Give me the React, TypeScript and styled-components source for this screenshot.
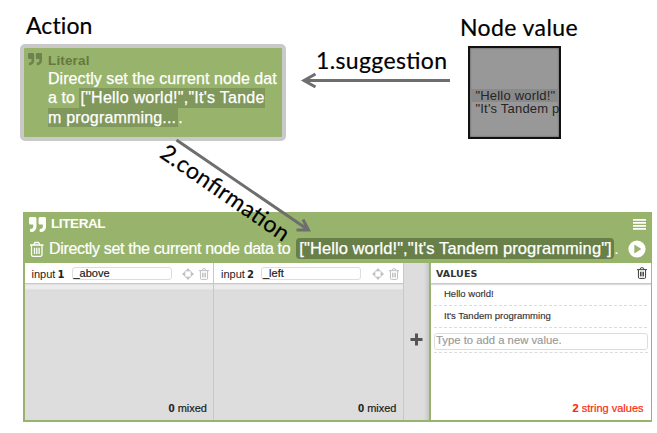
import React from "react";
import styled, { createGlobalStyle } from "styled-components";
import { FaQuoteRight } from "react-icons/fa";

const GREEN = "#98b46c";

const Global = createGlobalStyle`
  *, *::before, *::after { box-sizing: border-box; }
  html, body { margin: 0; background: #fff; overflow: hidden; }
  body { font-family: "Liberation Sans", Arial, sans-serif; color: #333; }
`;

const Page = styled.main`
  position: relative;
  display: flex;
  flex-direction: column;
  width: 657px;
  height: 433px;
  background: #fff;
`;

const Stage = styled.section`
  display: flex;
  justify-content: space-between;
  height: 212px;
  padding: 11px 79px 0 20px;
`;

const Figure = styled.div<{ $top?: number }>`
  display: flex;
  flex-direction: column;
  padding-top: ${(p) => p.$top ?? 0}px;
`;

const Caption = styled.h2<{ $indent: number; $spacing: number }>`
  margin: 0 0 0 ${(p) => p.$indent}px;
  font: 400 23px/28px Lato, sans-serif;
  letter-spacing: ${(p) => p.$spacing}px;
  color: #000;
  white-space: nowrap;
  height: 28px;
  -webkit-text-stroke: 0.2px #000;
`;

const ActionCard = styled.article`
  display: grid;
  grid-template-columns: 20px 1fr;
  align-content: start;
  margin-top: 5px;
  width: 266px;
  height: 97px;
  padding: 4px 0 0 4px;
  border: 4.5px solid #c9c9c9;
  border-radius: 5px;
  background: ${GREEN};
`;

const CardIcon = styled(FaQuoteRight)`
  width: 14px;
  height: 14px;
  color: #6d824d;
`;

const CardTitle = styled.h3`
  margin: 0;
  padding-top: 0.5px;
  font-size: 13.5px;
  line-height: 16px;
  font-weight: 700;
  letter-spacing: 0.15px;
  color: #64783f;
`;

const CardText = styled.p`
  grid-column: 2;
  margin: 0;
  font-size: 16px;
  line-height: 19.5px;
  color: #fff;
  white-space: nowrap;
  letter-spacing: 0.06px;
  -webkit-text-stroke: 0.25px #fff;
`;

const CardLine = styled.span`
  display: block;
  height: 19.5px;
`;

const Mark = styled.mark<{ $first?: boolean }>`
  display: inline-block;
  height: 19.5px;
  padding: ${(p) => (p.$first ? "0 0 0 1px" : "0 2px 0 0")};
  background: #80985b;
  color: #fff;
  letter-spacing: ${(p) => (p.$first ? 0.26 : 0.18)}px;
`;

const NodeBox = styled.div`
  width: 93px;
  height: 93px;
  margin: 5px 0 0 8px;
  padding-top: 41.5px;
  overflow: hidden;
  border: 2px solid #111;
  background: #989898;
  box-shadow: inset 0 0 2px #444;
`;

const NodeLine = styled.div<{ $active?: boolean }>`
  height: 13px;
  padding-left: 5.5px;
  font-size: 13px;
  line-height: 13px;
  letter-spacing: 0.2px;
  white-space: nowrap;
  color: #252525;
  background: ${(p) => (p.$active ? "#898989" : "transparent")};
`;

const Panel = styled.section`
  display: flex;
  flex-direction: column;
  width: 629px;
  height: 209.5px;
  margin-left: 23px;
  background: ${GREEN};
`;

const PanelHead = styled.header`
  display: grid;
  grid-template-rows: 24px 25px;
  height: 51px;
  padding: 0 6px 0 6px;
  color: #fff;
`;

const HeadRow = styled.div`
  display: flex;
  align-items: center;
  white-space: nowrap;
`;

const HeadQuote = styled(FaQuoteRight)`
  width: 17px;
  height: 17px;
  flex: none;
  margin-top: 1px;
`;

const HeadTitle = styled.h1`
  margin: 0 0 0 5px;
  font-size: 13.5px;
  line-height: 16px;
  font-weight: 700;
  letter-spacing: -0.4px;
  flex: 1;
`;

const Sentence = styled.div`
  margin-left: 5px;
  font-size: 16px;
  line-height: 20px;
  letter-spacing: -0.33px;
  -webkit-text-stroke: 0.2px #fff;
`;

const Literal = styled.span`
  height: 20.5px;
  margin-left: 6px;
  padding: 0 2px 0 3px;
  border-radius: 4px;
  background: #687f47;
  font-size: 16.5px;
  line-height: 20.5px;
  letter-spacing: 0.09px;
  -webkit-text-stroke: 0.25px #fff;
`;

const Stop = styled.span`
  margin-left: 0.5px;
  font-size: 16px;
  line-height: 20px;
`;

const Spacer = styled.span`
  flex: 1;
`;

const Body = styled.div`
  display: flex;
  height: 157px;
  margin: 0 1.5px;
`;

const Column = styled.div`
  display: flex;
  flex-direction: column;
  flex: none;
  width: 189.5px;
  background: #ddd;
  border-right: 1px solid #c8c8c8;
`;

const ColumnHead = styled.div`
  display: flex;
  align-items: center;
  height: 21px;
  padding: 1px 4px 0 7px;
  background: #fff;
  border-bottom: 1px solid #c9c9c9;
  color: #222;
`;

const Strip = styled.div`
  height: 7px;
  background: linear-gradient(#dedede, #eee 30%, #eaeaea 70%, #d4d4d4);
`;

const InputLabel = styled.span`
  width: 40px;
  font-size: 11px;
  white-space: nowrap;
  letter-spacing: 0;
  b { font-family: "DejaVu Sans", sans-serif; font-size: 10px; margin-left: -1px; }
`;

const Field = styled.span`
  width: 100px;
  height: 13px;
  padding-left: 1px;
  border: 1px solid #ddd;
  border-radius: 3px;
  font-size: 11px;
  line-height: 11px;
  color: #222;
  -webkit-text-stroke: 0.2px #222;
`;

const Tools = styled.span`
  display: flex;
  align-items: center;
  gap: 5px;
  margin-left: auto;
`;

const Count = styled.div<{ $red?: boolean }>`
  margin-top: auto;
  padding: 0 ${(p) => (p.$red ? 7 : 6)}px 5.5px 0;
  text-align: right;
  font-size: 11px;
  line-height: 13px;
  color: ${(p) => (p.$red ? "#fb2a0a" : "#1c1c1c")};
  -webkit-text-stroke: 0.2px ${(p) => (p.$red ? "#fb2a0a" : "#1c1c1c")};
`;

const AddColumn = styled.div`
  display: flex;
  align-items: center;
  justify-content: center;
  width: 25px;
  padding-bottom: 5px;
  background: linear-gradient(90deg, #ddd 80%, #c6c6c6);
`;

const Values = styled.div`
  display: flex;
  flex-direction: column;
  flex: 1;
  margin-left: 2.5px;
  background: #fff;
`;

const ValuesHead = styled.div`
  display: flex;
  align-items: center;
  justify-content: space-between;
  height: 21px;
  padding: 0 4px 0 5px;
  border-bottom: 1px solid #c9c9c9;
  box-shadow: 0 1px 1px #ddd;
  font: 700 9.5px "DejaVu Sans", sans-serif;
  letter-spacing: 0.1px;
  color: #333;
`;

const ValueRow = styled.div`
  height: 22px;
  margin: 0 4px 0 3px;
  padding: 2.5px 0 0 10px;
  border-bottom: 1px dashed #dcdcdc;
  font-size: 9.5px;
  line-height: 13px;
  color: #333;
  -webkit-text-stroke: 0.15px #333;
`;

const NewValue = styled.div`
  height: 25px;
  margin: 0 3px;
  padding-top: 5px;
  border-bottom: 1px dashed #dcdcdc;
`;

const NewField = styled.div`
  height: 17px;
  padding-left: 1px;
  border: 1px solid #ddd;
  border-radius: 3px;
  font-size: 11.3px;
  line-height: 13px;
  color: #999;
  -webkit-text-stroke: 0.15px #999;
`;

const Overlay = styled.svg`
  position: absolute;
  inset: 0;
  pointer-events: none;
  font-family: Lato, sans-serif;
`;

function Trash({ color, w, h }: { color: string; w: number; h: number }) {
  return (
    <svg width={w} height={h} viewBox="0 0 14 16" preserveAspectRatio="none" fill="none" stroke={color} strokeWidth="1.3">
      <path d="M0 3.5H14M4.3 3L5 1.5Q5.2 1 5.8 1H8.2Q8.8 1 9 1.5L9.7 3M2 4V13.6Q2 15.2 3.4 15.2H10.6Q12 15.2 12 13.6V4M5 6.3V12.5M7 6.3V12.5M9 6.3V12.5" />
    </svg>
  );
}

function Target() {
  return (
    <svg width="12" height="12" viewBox="0 0 12 12" fill="#bdbdbd">
      <path d="M6 0L8.4 3H3.6ZM6 12L3.6 9H8.4ZM0 6L3 3.6V8.4ZM12 6L9 8.4V3.6Z" />
      <path d="M3 3H9V9H3Z" fill="none" stroke="#ccc" strokeWidth=".8" />
    </svg>
  );
}

function InputColumn({ index, name }: { index: number; name: string }) {
  return (
    <Column>
      <ColumnHead>
        <InputLabel>input <b>{index}</b></InputLabel>
        <Field>{name}</Field>
        <Tools>
          <Target />
          <Trash color="#bcbcbc" w={10} h={12} />
        </Tools>
      </ColumnHead>
      <Strip />
      <Count><b>0</b> mixed</Count>
    </Column>
  );
}

export default function App() {
  return (
    <Page>
      <Global />
      <Stage>
        <Figure>
          <Caption $indent={6} $spacing={0.1}>Action</Caption>
          <ActionCard>
            <CardIcon />
            <CardTitle>Literal</CardTitle>
            <CardText>
              <CardLine>Directly set the current node dat</CardLine>
              <CardLine>a to <Mark $first>["Hello world!","It's Tande</Mark></CardLine>
              <CardLine><Mark>m programming...</Mark>.</CardLine>
            </CardText>
          </ActionCard>
        </Figure>
        <Figure $top={1.5}>
          <Caption $indent={0} $spacing={0.4}>Node value</Caption>
          <NodeBox>
            <NodeLine $active>"Hello world!"</NodeLine>
            <NodeLine>"It's Tandem p</NodeLine>
          </NodeBox>
        </Figure>
      </Stage>
      <Panel>
        <PanelHead>
          <HeadRow>
            <HeadQuote />
            <HeadTitle>LITERAL</HeadTitle>
            <svg width="13" height="11" viewBox="0 0 13 11" fill="#fff">
              <path d="M0 0H13V1.7H0ZM0 3H13V4.7H0ZM0 6H13V7.7H0ZM0 9H13V10.7H0Z" />
            </svg>
          </HeadRow>
          <HeadRow>
            <svg width="15" height="17" viewBox="-.5 -1.5 15 17" fill="none" stroke="#fff" strokeWidth="1.3">
              <path d="M0.5 3.5H14M4.3 3L5 1.5Q5.2 1 5.8 1H8.7Q9.3 1 9.5 1.5L10.2 3M2 4V13Q2 14.8 3.4 14.8H11.1Q12.5 14.8 12.5 13V4M5 6.3V12.5M7.3 6.3V12.5M9.6 6.3V12.5" />
            </svg>
            <Sentence>Directly set the current node data to</Sentence>
            <Literal>["Hello world!","It's Tandem programming"]</Literal>
            <Stop>.</Stop>
            <Spacer />
            <svg width="18" height="18" viewBox="0 0 18 18">
              <circle cx="9" cy="9" r="8.6" fill="#fff" />
              <path d="M6.3 4.6L13.4 9L6.3 13.4Z" fill={GREEN} />
            </svg>
          </HeadRow>
        </PanelHead>
        <Body>
          <InputColumn index={1} name="_above" />
          <InputColumn index={2} name="_left" />
          <AddColumn>
            <svg width="13" height="13" viewBox="0 0 13 13">
              <path d="M6.5 .5V12.5M.5 6.5H12.5" stroke="#555" strokeWidth="3" />
            </svg>
          </AddColumn>
          <Values>
            <ValuesHead>
              VALUES
              <Trash color="#333" w={10} h={12} />
            </ValuesHead>
            <ValueRow>Hello world!</ValueRow>
            <ValueRow>It's Tandem programming</ValueRow>
            <NewValue><NewField>Type to add a new value.</NewField></NewValue>
            <Count $red><b>2</b> string values</Count>
          </Values>
        </Body>
      </Panel>
      <Overlay width="657" height="433" viewBox="0 0 657 433">
        <g fill="none" stroke="#6e6e6e" strokeWidth="3">
          <path d="M450 80.5H304M315.5 74L304 80.5L315.5 87" />
          <path d="M176.5 140L308.5 230M303 219.5L308.5 230L296.5 230" />
        </g>
        <g fontSize="23" stroke="#000" strokeWidth=".2">
          <text x="316" y="69" textLength="131">1.suggestion</text>
          <text transform="translate(158.5 156.5) rotate(34.6)" textLength="151">2.confirmation</text>
        </g>
      </Overlay>
    </Page>
  );
}
